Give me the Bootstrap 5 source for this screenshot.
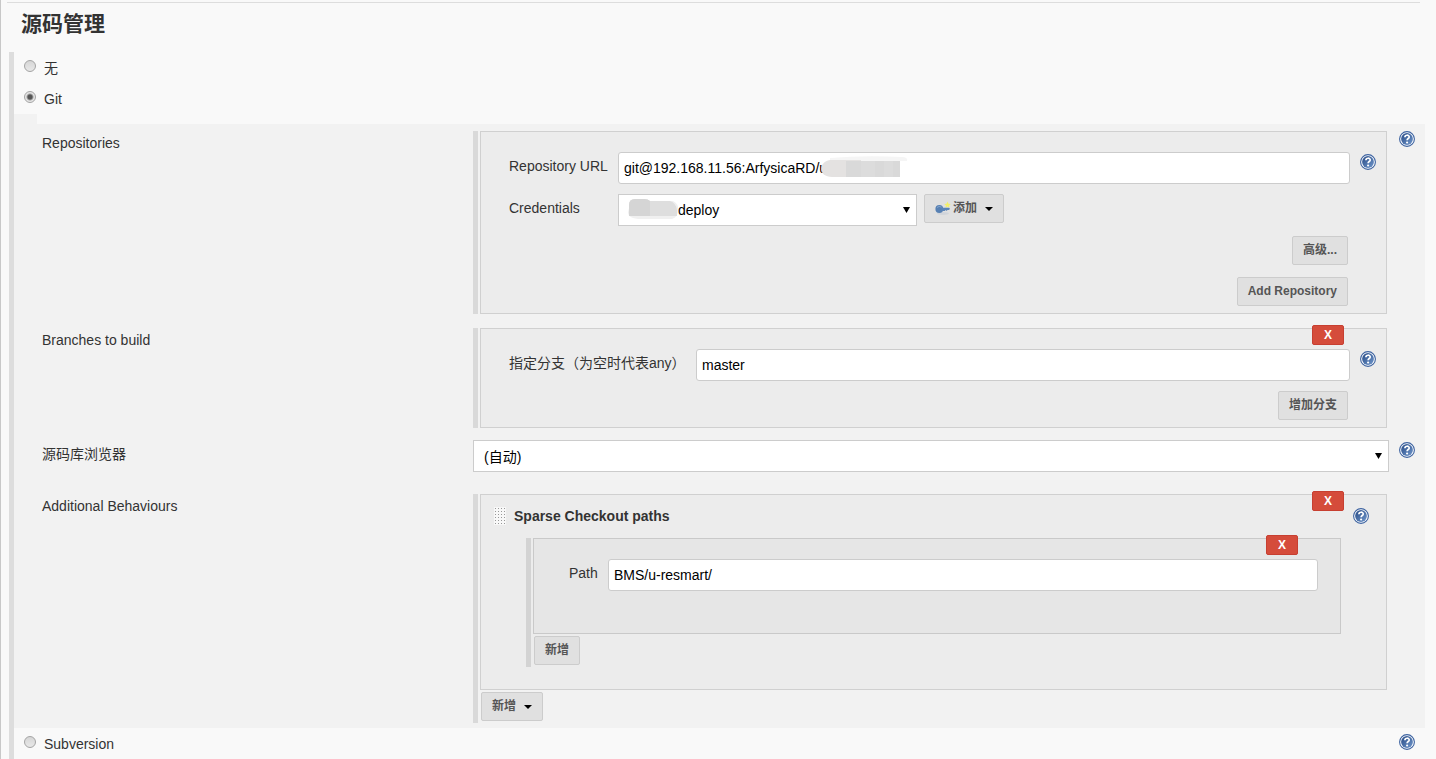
<!DOCTYPE html>
<html lang="zh-CN">
<head>
<meta charset="utf-8">
<meta name="viewport" content="width=device-width, initial-scale=1">
<title>源码管理</title>
<link rel="stylesheet" href="https://cdn.jsdelivr.net/npm/bootstrap@5.3.0/dist/css/bootstrap.min.css">
<style>
  body {
    background: #f9f9f9;
    color: #333;
    font-family: "Liberation Sans", "Noto Sans CJK SC", sans-serif;
    font-size: 14px;
    line-height: 20px;
  }
  .page { border-left: 1px solid #c8c8c8; padding: 2px 11px 0 8px; min-height: 100vh; }
  .rule { border-top: 1px solid #ddd; margin: 0 5px 0 -2px; }
  .section-title { font-size: 21px; line-height: 28px; font-weight: 700; margin: 7px 0 14px 12px; }
  .scm { border-left: 5px solid #ddd; }
  .scm-option { height: 31px; padding: 6px 10px 0; }
  .scm-radio {
    appearance: none; width: 12px; height: 12px; margin: 2px 8px 0 0; flex: none;
    border: 1px solid #a4a4a4; border-radius: 50%;
    background: linear-gradient(#d6d6d6, #e8e8e8);
  }
  .scm-radio:checked { background: radial-gradient(circle, #555 0 2px, #e6e6e6 4px); }
  .tab-stub { width: 23px; height: 10px; background: #f2f2f2; }
  .git-panel { background: #f2f2f2; padding: 7px 0 5px; }
  .setting { display: grid; grid-template-columns: 431px minmax(0, 1fr) 36px; padding-left: 28px; }
  .setting-name { padding-top: 2px; }
  .gap-wide { margin-top: 22px; }
  .gap-mid { margin-top: 14px; }
  .gap-small { margin-top: 12px; }
  .gap-field { margin-top: 10px; }
  .group { display: flow-root; border-left: 5px solid #d9d9d9; padding: 0 2px; }
  .box { position: relative; background: #ececec; border: 1px solid #d0d0d0; }
  .box-form { padding: 20px 10px 7px 28px; }
  .inner-group { border-left-color: #d3d3d3; margin: 0 43px 22px 45px; }
  .inner-box { background: #e6e6e6; border-color: #c9c9c9; padding: 20px 22px 42px 35px; }
  .behaviour-head { padding: 11px 17px 12px 13px; }
  .name-url { width: 109px; }
  .name-branch { width: 187px; }
  .name-path { width: 39px; }
  .name-top { padding-top: 4px; flex: none; }
  .field {
    width: 100%; height: 32px; padding: 0 5px; color: #000; font-size: 14px;
    border: 1px solid #ccc; border-radius: 3px; background: #fff;
  }
  .pick {
    width: 100%; height: 32px; padding: 2px 24px 0 10px; color: #000; font-size: 14px;
    appearance: none; border: 1px solid #ccc; border-radius: 0;
    background: #fff url("data:image/svg+xml,%3Csvg xmlns='http://www.w3.org/2000/svg' width='7' height='6'%3E%3Cpath d='M0 0h7L3.5 6z'/%3E%3C/svg%3E") no-repeat right 6px center;
  }
  .credential { width: 299px; }
  .credential .pick { padding: 0 24px 0 59px; }
  .tool-btn {
    height: 29px; padding: 0 10px 1px; font-size: 12px; line-height: 18px; font-weight: 700;
    color: #555; background: #e0e0e0; border: 1px solid #ccc; border-radius: 2px;
  }
  .key-btn { margin-left: 7px; }
  .key-icon { margin-right: 2px; }
  .add-btn { margin: 2px 0 2px 1px; }
  .caret { width: 8px; height: 4px; margin: 2px 0 0 8px; fill: #000; }
  .remove-btn {
    position: absolute; top: -4px; right: 42px; width: 32px; height: 20px; padding: 0;
    font-size: 12px; line-height: 18px; font-weight: 700; color: #fff;
    background: #d54c3b; border: 1px solid #c73f31; border-radius: 2px;
  }
  .smudge { position: absolute; pointer-events: none; }
  .smudge-url { left: 200px; top: 4px; }
  .smudge-user { left: 9px; top: 3px; }
  .help-btn { display: block; width: 16px; height: 16px; margin-left: 10px; flex: none; }
  .help-btn svg { display: block; }
  .help-drop { margin-top: 2px; }
  .form-actions { padding-right: 28px; }
</style>
</head>
<body>
<svg width="0" height="0" class="position-absolute" aria-hidden="true">
  <defs>
    <linearGradient id="helpFill" x1="0" y1="0" x2="1" y2="1">
      <stop offset="0" stop-color="#274a85"/><stop offset="1" stop-color="#7198cc"/>
    </linearGradient>
    <symbol id="help" viewBox="0 0 16 16">
      <circle cx="8" cy="8" r="7.4" fill="#fff" stroke="#3c62a0" stroke-width="1.1"/>
      <circle cx="8" cy="8" r="5.9" fill="url(#helpFill)"/>
      <path d="M5.900 6.200C6 3.600 10.200 3.600 10.200 6c0 1.500-2.100 1.600-2.100 3.200" fill="none" stroke="#fff" stroke-width="1.700"/>
      <circle cx="8.100" cy="11.500" r="1.100" fill="#fff"/>
    </symbol>
    <symbol id="caret" viewBox="0 0 8 4"><path d="M0 0h8L4 4z"/></symbol>
  </defs>
</svg>

<main class="page d-flex flex-column">
  <div class="rule"></div>
  <h1 class="section-title">源码管理</h1>

  <div class="scm flex-grow-1">
    <div class="scm-option d-flex align-items-start">
      <input class="scm-radio" type="radio" name="scm" id="scm-none"><label for="scm-none">无</label>
    </div>
    <div class="scm-option d-flex align-items-start">
      <input class="scm-radio" type="radio" name="scm" id="scm-git" checked><label for="scm-git">Git</label>
    </div>
    <div class="tab-stub"></div>

    <div class="git-panel">
      <section class="setting">
        <div class="setting-name">Repositories</div>
        <div class="group">
          <div class="box box-form">
            <div class="d-flex align-items-start">
              <label class="name-top name-url" for="repo-url">Repository URL</label>
              <div class="position-relative flex-grow-1">
                <input class="field" id="repo-url" type="text" value="git@192.168.11.56:ArfysicaRD/u">
                <svg class="smudge smudge-url" width="92" height="24" viewBox="0 0 92 24" aria-hidden="true">
                  <path d="M12 2Q45-1 84 1q6 0 5 4H12z" fill="#f5f5f5"/>
                  <path d="M12 4h31v17H14C0 21 0 6 12 4z" fill="#e4e2e1"/>
                  <path d="M28 5h54v16H28z" fill="#d9d9d9"/>
                  <path d="M43 5h14v16H43zM66 5h9v16h-9z" fill="#dcdcdc"/>
                </svg>
              </div>
              <a class="help-btn help-drop" href="#" aria-label="帮助"><svg width="16" height="16"><use href="#help"/></svg></a>
            </div>
            <div class="gap-field d-flex align-items-start">
              <label class="name-top name-url" for="credentials">Credentials</label>
              <div class="position-relative credential">
                <select class="pick" id="credentials"><option>deploy</option></select>
                <svg class="smudge smudge-user" width="54" height="24" viewBox="0 0 54 24" aria-hidden="true">
                  <path d="M4 4h42q6 3 5 9 0 7-6 9H14Q1 22 1 15z" fill="#f0f0f0"/>
                  <path d="M2 8q0-6 6-6h9q4 0 6 2h20q6 2 7 9v6H2z" fill="#dedede"/>
                  <path d="M2 8q0-6 6-6h9q4 0 6 2v15H2z" fill="#d5d5d5"/>
                </svg>
              </div>
              <button class="tool-btn key-btn d-flex align-items-center" type="button">
                <svg width="16" height="16" viewBox="0 0 16 16" class="key-icon" aria-hidden="true">
                  <ellipse cx="8" cy="13.500" rx="6" ry="1.500" fill="#d0d4da"/>
                  <path d="M12.500 1.500l1 2.200 2.300.3-1.700 1.500.4 2.200-2-1.100-2 1.100.4-2.200-1.700-1.500 2.300-.3z" fill="#f3f06a"/>
                  <circle cx="4.300" cy="9" r="3.900" fill="#5780b3"/>
                  <path d="M6.500 7.800H14l1 1-1 1.200h-1.500l-.8.900-1-.9-1 .9H6.500z" fill="#5a84b8"/>
                  <path d="M2 7.500q2-2 4.500-.4" stroke="#86a6cc" fill="none"/>
                </svg>添加<svg class="caret"><use href="#caret"/></svg>
              </button>
            </div>
            <div class="form-actions gap-field d-flex flex-column align-items-end">
              <button class="tool-btn" type="button">高级...</button>
              <button class="tool-btn gap-small" type="button">Add Repository</button>
            </div>
          </div>
        </div>
        <a class="help-btn" href="#" aria-label="帮助"><svg width="16" height="16"><use href="#help"/></svg></a>
      </section>

      <section class="setting gap-mid">
        <div class="setting-name">Branches to build</div>
        <div class="group">
          <div class="box box-form">
            <button class="remove-btn" type="button">X</button>
            <div class="d-flex align-items-start">
              <label class="name-top name-branch" for="branch">指定分支（为空时代表any）</label>
              <input class="field" id="branch" type="text" value="master">
              <a class="help-btn help-drop" href="#" aria-label="帮助"><svg width="16" height="16"><use href="#help"/></svg></a>
            </div>
            <div class="form-actions gap-field d-flex justify-content-end">
              <button class="tool-btn" type="button">增加分支</button>
            </div>
          </div>
        </div>
      </section>

      <section class="setting gap-small">
        <label class="name-top" for="browser">源码库浏览器</label>
        <select class="pick" id="browser"><option>(自动)</option></select>
        <a class="help-btn help-drop" href="#" aria-label="帮助"><svg width="16" height="16"><use href="#help"/></svg></a>
      </section>

      <section class="setting gap-wide">
        <div class="setting-name">Additional Behaviours</div>
        <div class="group">
          <div class="box">
            <button class="remove-btn" type="button">X</button>
            <div class="d-flex align-items-center behaviour-head">
              <svg width="12" height="18" aria-hidden="true">
                <defs><pattern id="dots" width="3" height="3" patternUnits="userSpaceOnUse"><rect width="3" height="3" fill="#f8f8f8"/><rect x="1" y="1" width="1" height="1" fill="#999"/></pattern></defs>
                <rect width="12" height="18" fill="url(#dots)"/>
              </svg>
              <strong class="ms-2 me-auto">Sparse Checkout paths</strong>
              <a class="help-btn" href="#" aria-label="帮助"><svg width="16" height="16"><use href="#help"/></svg></a>
            </div>
            <div class="group inner-group">
              <div class="box inner-box">
                <button class="remove-btn" type="button">X</button>
                <div class="d-flex align-items-start">
                  <label class="name-top name-path" for="path">Path</label>
                  <input class="field" id="path" type="text" value="BMS/u-resmart/">
                </div>
              </div>
              <button class="tool-btn add-btn d-block" type="button">新增</button>
            </div>
          </div>
          <button class="tool-btn add-btn d-flex align-items-center" type="button">新增<svg class="caret"><use href="#caret"/></svg></button>
        </div>
      </section>
    </div>

    <div class="scm-option d-flex align-items-start">
      <input class="scm-radio" type="radio" name="scm" id="scm-svn"><label for="scm-svn">Subversion</label>
      <a class="help-btn ms-auto" href="#" aria-label="帮助"><svg width="16" height="16"><use href="#help"/></svg></a>
    </div>
  </div>
</main>
<script src="https://cdn.jsdelivr.net/npm/bootstrap@5.3.0/dist/js/bootstrap.bundle.min.js"></script>
</body>
</html>
